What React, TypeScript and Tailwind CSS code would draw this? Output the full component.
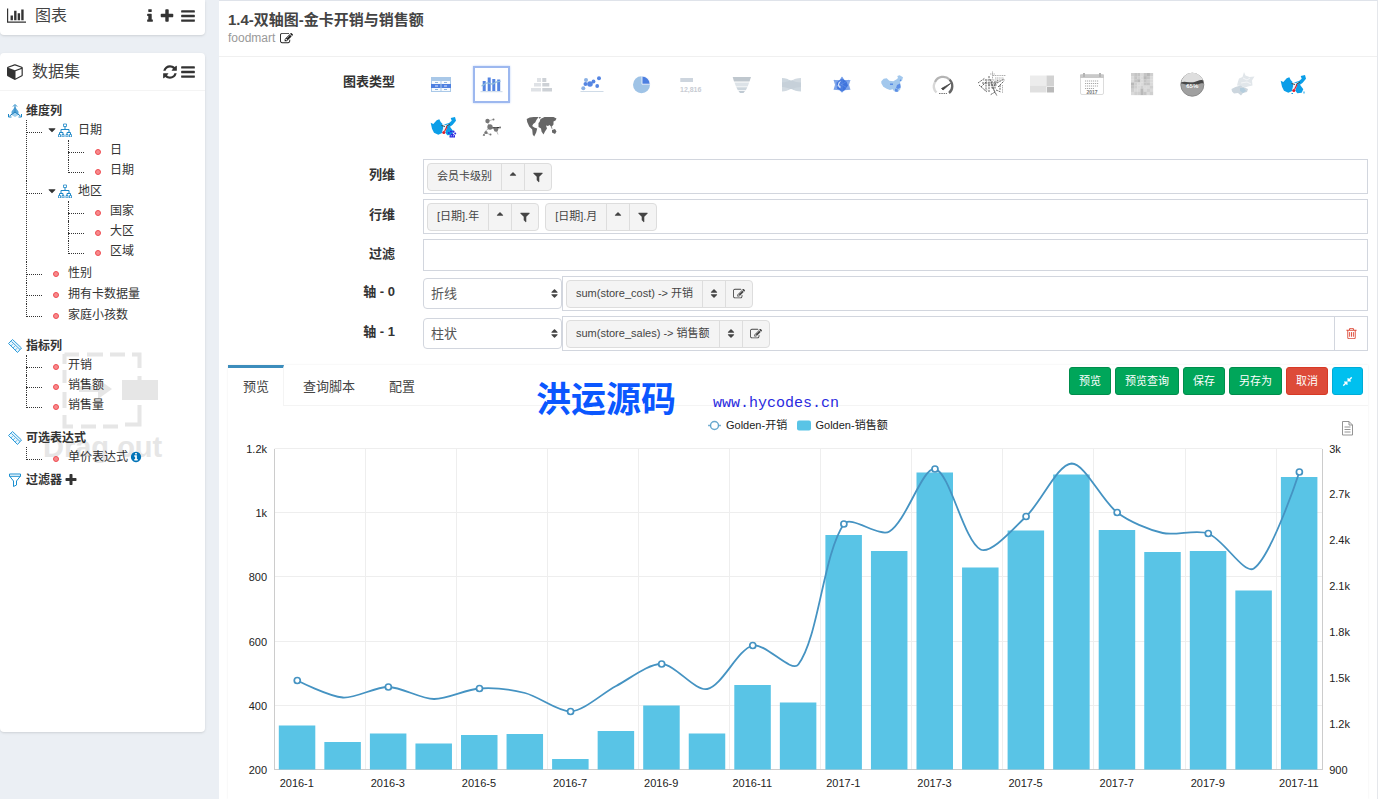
import { ReactNode } from "react";

const glyphs = {
  chart:
    "M640 896v512h-256v-512h256zm384-512v1024h-256v-1024h256zm1024 1152v128h-2048v-1536h128v1408h1920zm-640-896v768h-256v-768h256zm384-384v1152h-256v-1152h256z",
  info: "M1216 1344v128q0 26-19 45t-45 19h-512q-26 0-45-19t-19-45v-128q0-26 19-45t45-19h64v-384h-64q-26 0-45-19t-19-45v-128q0-26 19-45t45-19h384q26 0 45 19t19 45v576h64q26 0 45 19t19 45zm-128-1152v192q0 26-19 45t-45 19h-256q-26 0-45-19t-19-45v-192q0-26 19-45t45-19h256q26 0 45 19t19 45z",
  plus: "M1600 736v192q0 40-28 68t-68 28h-416v416q0 40-28 68t-68 28h-192q-40 0-68-28t-28-68v-416h-416q-40 0-68-28t-28-68v-192q0-40 28-68t68-28h416v-416q0-40 28-68t68-28h192q40 0 68 28t28 68v416h416q40 0 68 28t28 68z",
  bars: "M1664 1344v128q0 26-19 45t-45 19h-1408q-26 0-45-19t-19-45v-128q0-26 19-45t45-19h1408q26 0 45 19t19 45zm0-512v128q0 26-19 45t-45 19h-1408q-26 0-45-19t-19-45v-128q0-26 19-45t45-19h1408q26 0 45 19t19 45zm0-512v128q0 26-19 45t-45 19h-1408q-26 0-45-19t-19-45v-128q0-26 19-45t45-19h1408q26 0 45 19t19 45z",
  cube: "M896 1629l640-349v-636l-640 233v752zm-64-865l698-254-698-254-698 254zm832-252v768q0 35-18 65t-49 47l-704 384q-28 16-61 16t-61-16l-704-384q-31-17-49-47t-18-65v-768q0-40 23-73t61-47l704-256q22-8 44-8t44 8l704 256q38 14 61 47t23 73z",
  refresh:
    "M1639 1056q0 5-1 7-64 268-268 434.5t-478 166.5q-146 0-282.5-55t-243.5-157l-129 129q-19 19-45 19t-45-19-19-45v-448q0-26 19-45t45-19h448q26 0 45 19t19 45-19 45l-137 137q71 66 161 102t187 36q134 0 250-65t186-179q11-17 53-117 8-23 30-23h192q13 0 22.5 9.5t9.5 22.5zm25-800v448q0 26-19 45t-45 19h-448q-26 0-45-19t-19-45 19-45l138-138q-148-137-349-137-134 0-250 65t-186 179q-11 17-53 117-8 23-30 23h-199q-13 0-22.5-9.5t-9.5-22.5v-7q65-268 270-434.5t480-166.5q146 0 284 55.5t245 156.5l130-129q19-19 45-19t45 19 19 45z",
  edit: "M888 1184l116-116-152-152-116 116v56h96v96h56zm440-720q-16-16-33 1l-350 350q-17 17-1 33t33-1l350-350q17-17 1-33zm80 594v190q0 119-84.5 203.5t-203.5 84.5h-832q-119 0-203.5-84.5t-84.5-203.5v-832q0-119 84.5-203.5t203.5-84.5h832q63 0 117 25 15 7 18 23 3 17-9 29l-49 49q-14 14-32 8-23-6-45-6h-832q-66 0-113 47t-47 113v832q0 66 47 113t113 47h832q66 0 113-47t47-113v-126q0-13 9-22l64-64q15-15 35-7t20 29zm-96-738l288 288-672 672h-288v-288zm444 132l-92 92-288-288 92-92q28-28 68-28t68 28l152 152q28 28 28 68t-28 68z",
  filter:
    "M1595 295q17 41-14 70l-493 493v742q0 42-39 59-13 5-25 5-27 0-45-19l-256-256q-19-19-19-45v-486l-493-493q-31-29-14-70 17-39 59-39h1280q42 0 59 39z",
  sort: "M1408 1088q0 26-19 45l-448 448q-19 19-45 19t-45-19l-448-448q-19-19-19-45t19-45 45-19h896q26 0 45 19t19 45zm0-384q0 26-19 45t-45 19h-896q-26 0-45-19t-19-45 19-45l448-448q19-19 45-19t45 19l448 448q19 19 19 45z",
  sortUp:
    "M1408 704q0 26-19 45t-45 19h-896q-26 0-45-19t-19-45 19-45l448-448q19-19 45-19t45 19l448 448q19 19 19 45z",
  caretDown:
    "M1408 704q0 26-19 45l-448 448q-19 19-45 19t-45-19l-448-448q-19-19-19-45t19-45 45-19h896q26 0 45 19t19 45z",
  trash:
    "M704 736v576q0 14-9 23t-23 9h-64q-14 0-23-9t-9-23v-576q0-14 9-23t23-9h64q14 0 23 9t9 23zm256 0v576q0 14-9 23t-23 9h-64q-14 0-23-9t-9-23v-576q0-14 9-23t23-9h64q14 0 23 9t9 23zm256 0v576q0 14-9 23t-23 9h-64q-14 0-23-9t-9-23v-576q0-14 9-23t23-9h64q14 0 23 9t9 23zm128 724v-948h-896v948q0 22 7 40.5t14.5 27 10.5 8.5h832q3 0 10.5-8.5t14.5-27 7-40.5zm-672-1076h448l-48-117q-7-9-17-11h-317q-10 2-17 11zm928 32v64q0 14-9 23t-23 9h-96v948q0 83-47 143.5t-113 60.5h-832q-66 0-113-58.5t-47-141.5v-952h-96q-14 0-23-9t-9-23v-64q0-14 9-23t23-9h309l70-167q15-37 54-63t79-26h320q40 0 79 26t54 63l70 167h309q14 0 23 9t9 23z",
  compress:
    "M896 960v448q0 26-19 45t-45 19-45-19l-144-144-332 332q-10 10-23 10t-23-10l-114-114q-10-10-10-23t10-23l332-332-144-144q-19-19-19-45t19-45 45-19h448q26 0 45 19t19 45zm755-672q0 13-10 23l-332 332 144 144q19 19 19 45t-19 45-45 19h-448q-26 0-45-19t-19-45v-448q0-26 19-45t45-19 45 19l144 144 332-332q10-10 23-10t23 10l114 114q10 10 10 23z",
  infoCircle:
    "M1152 1376v-160q0-14-9-23t-23-9h-96v-512q0-14-9-23t-23-9h-320q-14 0-23 9t-9 23v160q0 14 9 23t23 9h96v320h-96q-14 0-23 9t-9 23v160q0 14 9 23t23 9h448q14 0 23-9t9-23zm-128-896v-160q0-14-9-23t-23-9h-192q-14 0-23 9t-9 23v160q0 14 9 23t23 9h192q14 0 23-9t9-23zm640 416q0 209-103 385.5t-279.5 279.5-385.5 103-385.5-103-279.5-279.5-103-385.5 103-385.5 279.5-279.5 385.5-103 385.5 103 279.5 279.5 103 385.5z",
};

type GlyphName = keyof typeof glyphs;

function Glyph({ name, className }: { name: GlyphName; className: string }) {
  return (
    <svg
      viewBox={name === "chart" ? "0 0 2048 1792" : "0 0 1792 1792"}
      fill="currentColor"
      aria-hidden="true"
      className={`shrink-0 ${className}`}
    >
      <path d={glyphs[name]} />
    </svg>
  );
}

function IconButton({
  name,
  label,
  className,
}: {
  name: GlyphName;
  label: string;
  className: string;
}) {
  return (
    <button type="button" aria-label={label}>
      <Glyph name={name} className={className} />
    </button>
  );
}

/* ---------- sidebar tree ---------- */

function HierarchyIcon() {
  return (
    <svg viewBox="0 0 14 14" className="h-[14px] w-[14px] shrink-0" fill="none" stroke="#1a86c7">
      <path d="M7 3.500v3M3 10V6.500h8V10M1.500 11.500V9.500h3.500v2M9 11.500V9.500h3.500v2" />
      <path d="M5.500 1h3v2.500h-3zM.5 11.500h2V14h-2zM4 11.500h2V14H4zM8 11.500h2V14H8zM11.500 11.500h2V14h-2z" strokeWidth=".8" />
    </svg>
  );
}

function DimensionIcon() {
  return (
    <svg viewBox="0 0 14 14" className="h-[14px] w-[14px] shrink-0">
      <path d="M7 3 11 8 10.500 11 7 13 3.500 11 3 8z" fill="#9fcfec" />
      <path d="M7 1.500V8L1.500 12M7 8l5.500 4" stroke="#1477b8" fill="none" />
      <path d="M5 2.500 7 .5l2 2M.5 10v3h3M13.500 10v3h-3" stroke="#1a86c7" fill="none" />
      <path d="M7 3v5l-3 2V7zM7 3v5l3 2V7z" fill="#3b94cf" opacity=".7" />
    </svg>
  );
}

function RulerIcon() {
  return (
    <svg viewBox="0 0 14 14" className="h-[14px] w-[14px] shrink-0" fill="none" stroke="#2b9bdb">
      <path d="M.5 4.500 4.500.5l9 8.500-4 4.500z" fill="#e9f6fd" />
      <path d="M3 6.800l1.500-1.500M5.200 8.800l1.500-1.500M7.400 10.900l1.500-1.500M3.500 2.500l8.500 8" strokeWidth=".9" />
    </svg>
  );
}

function FunnelIcon() {
  return (
    <svg viewBox="0 0 14 14" className="h-[14px] w-[14px] shrink-0" fill="none" stroke="#1a8fd0">
      <path d="M1.500 1h11v2L8.500 8v4l-3 1.500V8l-4-5zM1.500 3.300h11" />
    </svg>
  );
}

const branch =
  "relative before:absolute before:left-0 before:top-0 before:h-[13px] before:w-4 before:border-b before:border-dotted before:border-[#333] after:absolute after:left-0 after:top-0 after:h-full after:border-l after:border-dotted after:border-[#333] last:after:h-[13px]";

function Leaf({ text, row = "h-5", children }: { text: string; row?: string; children?: ReactNode }) {
  return (
    <li className={branch}>
      <div className={`flex items-center pl-[27px] ${row}`}>
        <span className="mt-[3px] h-[6px] w-[6px] shrink-0 rounded-full border border-[#ef4d52] bg-[#f7898c]" />
        <span className="ml-[9px]">{text}</span>
        {children}
      </div>
    </li>
  );
}

function Folder({ text, items }: { text: string; items: string[] }) {
  return (
    <li className={`pb-px ${branch}`}>
      <div className="flex h-5 items-center pl-[20px]">
        <Glyph name="caretDown" className="h-3 w-3" />
        <HierarchyIcon />
        <span className="ml-[6px]">{text}</span>
      </div>
      <ul className="ml-[42px]">
        {items.map((item) => (
          <Leaf key={item} text={item} />
        ))}
      </ul>
    </li>
  );
}

function TreeSection({ icon, title, children }: { icon: ReactNode; title: string; children: ReactNode }) {
  return (
    <section className="relative">
      <h3 className="flex h-[18px] items-center gap-1 font-bold">
        {icon}
        {title}
      </h3>
      <ul className="ml-[18px]">{children}</ul>
    </section>
  );
}

function DragHint() {
  return (
    <svg viewBox="0 0 124 116" className="absolute left-[42px] top-[256px] w-[124px]" fill="#e6e6e6">
      <path
        d="M22.500 7.500H37M45 7.500h16M68 7.500h15M90 7.500h7.500V21M97.500 29v14M97.500 58v19.500H83M76 79.500H61M54 79.500H39M31 79.500h-8.500V68M22.500 61V45M22.500 36V23M22.500 17V7"
        fill="none"
        stroke="#e6e6e6"
        strokeWidth="4"
      />
      <rect x="80" y="33" width="36" height="20" />
      <path d="M37 39h19v-7l14 10-14 10v-7H37z" />
      <text x="1" y="110" fontSize="29" fontWeight="bold" fontFamily="Liberation Sans, sans-serif">
        Drag out
      </text>
    </svg>
  );
}

function Sidebar() {
  return (
    <aside className="w-[219px] shrink-0 pr-[14px] text-[#333]">
      <div className="flex h-[35px] items-center rounded-b-sm bg-white pb-1 pl-[7px] pr-[9px] shadow-sm">
        <Glyph name="chart" className="h-[17px] w-[19px]" />
        <h2 className="ml-[9px] text-base text-[#444]">图表</h2>
        <div className="ml-auto flex items-center">
          <IconButton name="info" label="帮助" className="h-4 w-4" />
          <IconButton name="plus" label="新增" className="ml-px h-4 w-4" />
          <IconButton name="bars" label="菜单" className="ml-[5px] h-4 w-4" />
        </div>
      </div>

      <div className="mt-[18px] rounded-sm bg-white shadow-sm">
        <div className="flex h-[38px] items-center border-b border-[#f4f4f4] pl-[7px] pr-[9px]">
          <Glyph name="cube" className="h-[17px] w-[17px]" />
          <h2 className="ml-2 text-base text-[#444]">数据集</h2>
          <div className="ml-auto flex items-center">
            <IconButton name="refresh" label="刷新" className="h-4 w-4" />
            <IconButton name="bars" label="菜单" className="ml-[2px] h-4 w-4" />
          </div>
        </div>

        <div className="relative min-h-[641px] pl-2 pt-[11px] text-xs">
          <DragHint />
          <TreeSection icon={<DimensionIcon />} title="维度列">
            <Folder text="日期" items={["日", "日期"]} />
            <Folder text="地区" items={["国家", "大区", "区域"]} />
            <Leaf text="性别" row="h-[21px]" />
            <Leaf text="拥有卡数据量" row="h-[21px]" />
            <Leaf text="家庭小孩数" row="h-[21px]" />
          </TreeSection>
          <div className="mt-3">
            <TreeSection icon={<RulerIcon />} title="指标列">
              <Leaf text="开销" />
              <Leaf text="销售额" />
              <Leaf text="销售量" />
            </TreeSection>
          </div>
          <div className="mt-[14px]">
            <TreeSection icon={<RulerIcon />} title="可选表达式">
              <Leaf text="单价表达式">
                <Glyph name="infoCircle" className="ml-[2px] h-3 w-3 text-[#0073b7]" />
              </Leaf>
            </TreeSection>
          </div>
          <div className="relative mt-1 flex h-[18px] items-center font-bold">
            <FunnelIcon />
            <span className="ml-1 mr-[2px]">过滤器</span>
            <IconButton name="plus" label="新增过滤器" className="h-[14px] w-[14px]" />
          </div>
        </div>
      </div>
    </aside>
  );
}

/* ---------- chart type icons, drawn on a 37 x 37 box ---------- */

const china =
  "M8.300 15.300l2.400-2.600 3-.4 2.600 2.400 4 .6 3.400-2L25 12l-.7-2 2.400-.7 3.300 2-1 3.400-2 1.300.7 4-.4 3.300L25 26l-4-.7-1.300-2-2.700.7-3.300-1.300-3.400-2-2-3.400z";
const chinaWest =
  "M7.700 14.700l2.600 1.300 3.400-3.700 2.600-1L17.700 14l2.600 2.700v4l-.6 4-4.400 2-4.300-2-2-4z";
const chinaEast =
  "M21 16.500l5-1.500 2.700-2.300-1-2.700L32 9l1 3.700-3.300 4-2.700 2 3.300 4.600-1.600 3.400-4.400.6-2-2.600 1.400-4.700z";

function MarkerMap({ baidu }: { baidu?: boolean }) {
  return (
    <>
      <path d={chinaWest} fill="#0b9ee8" />
      <path d={chinaEast} fill="#0b9ee8" />
      <path d="M19 16l4 1 3-1-3 4-2 5-2-1 1.500-5z" fill="#e8f4fb" />
      <path d="M18.500 17.500l3.500 1M27 16l-4 2.500" stroke="#444" strokeWidth="1" />
      <path d="M24 18.500l-2.500 5" stroke="#e0202a" strokeWidth="1.200" />
      <circle cx="20.800" cy="24.500" r="1.500" fill="#e0202a" />
      {baidu ? (
        <g fill="#2b2be0">
          <circle cx="25.800" cy="25" r="1" />
          <circle cx="28" cy="23.500" r="1.100" />
          <circle cx="30.500" cy="23.700" r="1.100" />
          <circle cx="32.200" cy="25.500" r="1" />
          <path d="M29.200 25l2.800 2.500v2h-5.500v-2z" />
          <path d="M27.800 27.800h1M30 27.800h1" stroke="#fff" strokeWidth=".8" />
        </g>
      ) : (
        <path d="M30.500 25.500h1v2h-1zM18.500 27h1.500v1h-1.500z" fill="#0b9ee8" />
      )}
    </>
  );
}

const heat = [
  "cbbdbac", "dbcdabd", "dbadbcd", "acddbbd", "bcdcddc", "cddadcd", "dccabdc",
];
const heatFill: Record<string, string> = { a: "#b8b8b8", b: "#c4c4c4", c: "#cfcfcf", d: "#dadada" };

const words =
  "M5 17l7-5M6 19l8 7M9 17h14M8 21l6-6M13 13v11M16 10v16M17 13l5 14M19 15v7M22 15v8M25 14l-6 9M24 17l7-4M25 21l6-6M20 22l4 8M22 26l-5 3M27 19v5M15 19h9M23 24l5 2";
const smallWords = "M20 9.500h13M22 12h9M24 14h8M18 14h6M19.500 5.500v8M29.500 19v8M10 14h6M11 24h4M17 8h5";

const typeIcons: { name: string; art: ReactNode }[] = [
  {
    name: "表格",
    art: (
      <>
        <path d="M8 11h20v15H8z" fill="#a9c8e8" />
        <path d="M9 15h18v3H9zM9 22h18v3H9z" fill="#f6fafd" />
        <path d="M8 18h20v4H8z" fill="#4c7fe0" />
        <path d="M12 16.500h3M21 16.500h3M12 23.500h3M21 23.500h3" stroke="#8fb4dd" />
        <path d="M12 20h3M21 20h3" stroke="#dce8fb" />
        <path d="M18 15v10" stroke="#a9c8e8" />
      </>
    ),
  },
  {
    name: "折柱图",
    art: (
      <>
        <path d="M9.700 15h3v10h-3zM14.700 11.500h3V25h-3zM19.300 13h3v12h-3zM24.200 13.500h3V25h-3z" fill="#5585e2" />
        <path d="M8.500 20c3-1 4-4 7-3s4 2 6 0 4-1 6-2" stroke="#8fbcdc" strokeWidth="1.300" fill="none" />
        <path d="M7.500 25.700h22" stroke="#c9d8e8" />
      </>
    ),
  },
  {
    name: "交叉图",
    art: (
      <>
        <path d="M14 12h4v4h-4zM11 17h7v3.500h-7zM8 22h10v3.500H8z" fill="#dfe2e6" />
        <path d="M19.300 12h4v4h-4zM19.300 17h7v3.500h-7zM19.300 22H29v3.500h-9.700z" fill="#cdd1d6" />
      </>
    ),
  },
  {
    name: "散点图",
    art: (
      <>
        <path d="M7.500 25.500h23" stroke="#cfdbe7" />
        <g fill="#8ab0e4">
          <circle cx="13" cy="14" r="2" />
          <circle cx="10.300" cy="22.300" r="2" />
        </g>
        <g fill="#5585e2">
          <circle cx="12.500" cy="18" r="2" />
          <circle cx="17" cy="18" r="2.800" />
          <circle cx="20.500" cy="15.500" r="1.900" />
          <circle cx="26" cy="12.300" r="2" />
          <circle cx="24.200" cy="20" r="1.900" />
        </g>
      </>
    ),
  },
  {
    name: "饼图",
    art: (
      <>
        <circle cx="18.500" cy="18.700" r="8.500" fill="#9fc3e6" />
        <path d="M19 18.200V10a8.500 8.500 0 0 1 8.200 8.200z" fill="#4c7fe0" stroke="#fff" strokeWidth=".8" />
      </>
    ),
  },
  {
    name: "指标卡",
    art: (
      <>
        <path d="M7.300 12H20v4H7.300z" fill="#cdd5de" />
        <text x="7" y="25.500" fontSize="7" fontWeight="bold" fill="#c8ccd3" fontFamily="Liberation Sans, sans-serif">
          12,816
        </text>
      </>
    ),
  },
  {
    name: "漏斗图",
    art: (
      <>
        <path d="M9.700 11H28l-1.500 4.500H11z" fill="#bfc7ce" />
        <path d="M11.500 16.500h14.700l-1.500 4H13z" fill="#dde3e8" />
        <path d="M13.300 21.300h11l-1.500 3h-8z" fill="#cdd6dd" />
        <path d="M15.500 25h6.500l-1.500 2H17z" fill="#c0cad3" />
      </>
    ),
  },
  {
    name: "桑基图",
    art: (
      <>
        <path d="M9 12c7 0 11 4.500 19 4.500v9C20 25.500 16 21 9 21z" fill="#cdd7df" />
        <path d="M9 25.500c7 0 11-4.500 19-4.500v-9C20 12 16 16.500 9 16.500z" fill="#c3ced7" opacity=".75" />
        <path d="M14 12.800l4 1.700 4-1.700zM14 24.800l4-1.700 4 1.700z" fill="#fff" />
      </>
    ),
  },
  {
    name: "雷达图",
    art: (
      <>
        <path d="M19 10.500l2.500 3.500 6 0-1.500 4.700 1.500 5-6 .5-2.500 2.500-2.500-2.500-6-.5 1.500-5L10.500 14l6 0z" fill="#82a8ea" />
        <path d="M19 12.500l4.500 3 1.500 4-3 4.500-3 1.500-5-3-.5-6z" fill="#3f74dd" />
        <path d="M18 14.500l-2.500 2-1 3.500 3 2.500v-2.500l-1.500-1z" fill="#dbe7fb" />
        <path d="M19 11v15M11 14l15 9M26 14l-15 9" stroke="#6d98e8" strokeWidth=".5" />
      </>
    ),
  },
  {
    name: "地图",
    art: (
      <>
        <path d={china} fill="#a3c8ed" />
        <path d="M24 19l3-1.500.7 4-2.700 1.500-2-1zM22 22.500l3 1-.5 2.500-2.500-.5z" fill="#5b8de6" />
        <path d="M17 17.500h3v1.500h-3zM26.500 15l1.500-2v2z" fill="#5b8de6" />
      </>
    ),
  },
  {
    name: "仪表盘",
    art: (
      <>
        <path d="M13.500 26.500A9 9 0 0 1 12 16" stroke="#d8d8d8" strokeWidth="2.300" fill="none" />
        <path d="M12 16a9 9 0 0 1 14.500-2.500" stroke="#b4b4b4" strokeWidth="2.300" fill="none" />
        <path d="M26.500 13.500a9 9 0 0 1-.5 13.500" stroke="#666" strokeWidth="2.300" fill="none" />
        <path d="M18.500 22.500l9-5-7.500 6.500z" fill="#444" stroke="#444" strokeWidth=".8" />
        <path d="M16 27.500h8" stroke="#777" strokeWidth="1.200" strokeDasharray="1.500 .8" />
      </>
    ),
  },
  {
    name: "词云",
    art: (
      <>
        <path d={words} stroke="#666" strokeWidth="1" strokeDasharray="2 .8" />
        <path d={smallWords} stroke="#999" strokeWidth=".8" strokeDasharray="1.200 .6" />
      </>
    ),
  },
  {
    name: "矩形树图",
    art: (
      <>
        <path d="M7 9.500h16.500v10H7z" fill="#ececec" />
        <path d="M7 19.500h16.500v7H7z" fill="#e0e0e0" />
        <path d="M23.500 9.500H31v11h-7.500z" fill="#d2d2d2" />
        <path d="M24 21h7v5.500h-7z" fill="#b9b9b9" />
      </>
    ),
  },
  {
    name: "日历图",
    art: (
      <>
        <rect x="7.500" y="8.500" width="23" height="20" rx="1.500" fill="#fff" stroke="#dcdcdc" />
        <path d="M7 8.500h24V12H7z" fill="#c9c9c9" />
        <path d="M10 7h2v4h-2zM26 7h2v4h-2z" fill="#b4b4b4" />
        <path d="M12 15h14M12 17.500h14M12 20h13M12 22.500h9" stroke="#a8a8a8" strokeWidth="1.200" strokeDasharray="1.200 .8" />
        <text x="13.500" y="27.500" fontSize="5" fontWeight="bold" fill="#777" fontFamily="Liberation Sans, sans-serif">
          2017
        </text>
      </>
    ),
  },
  {
    name: "热力图",
    art: (
      <>
        {heat.map((row, y) =>
          row.split("").map((c, x) => (
            <rect key={`${x}-${y}`} x={8 + x * 3.14} y={7 + y * 3.14} width="3.300" height="3.300" fill={heatFill[c]} />
          ))
        )}
      </>
    ),
  },
  {
    name: "水球图",
    art: (
      <>
        <circle cx="19.300" cy="18.700" r="11.500" fill="#a0a0a0" stroke="#8a8a8a" />
        <path d="M8.300 16.500a11.200 11.200 0 0 1 22-1z" fill="#dedede" />
        <path d="M8 16.500c4-2 8 .5 12 0s7-3.500 10-2l.5 3c-4-1-6 2.500-11 2.500S11 17 8 17.500z" fill="#484848" />
        <text x="19.300" y="21.500" fontSize="6" fontWeight="bold" fill="#fff" textAnchor="middle" fontFamily="Liberation Sans, sans-serif">
          65%
        </text>
      </>
    ),
  },
  {
    name: "区域地图",
    art: (
      <>
        <path d="M21 6l1.500 3.500 4 1.500 5-.5-2.500 4 .5 5-4.500 1-3 1-3-1.500-5-.5 1-4 1-3 3.500-1.500z" fill="#e1e6ea" />
        <path d="M20 12l4 2 3-2M18 17l6-1 4 2" stroke="#f8f9fa" fill="none" strokeWidth=".8" />
        <path d="M8.500 23l4-2 5-1.500 4 2 3.500 1.500-1 3-4 1-2 2.500-3-2.500-4 .5-2-2z" fill="#ccd6de" />
        <path d="M17 22l4 0 2 3-3 2-3-2z" fill="#b4cddd" />
      </>
    ),
  },
  { name: "标记地图", art: <MarkerMap /> },
  { name: "百度地图", art: <MarkerMap baidu /> },
  {
    name: "关系图",
    art: (
      <>
        <path d="M14 13.500l6-2M14 13.500l3 6M17 19.500l-5 4M17 19.500l6 2 5-2.500M12 24.500l-2 3M12 24.500l5 2M23 21.500l2 5" stroke="#aaa" strokeWidth=".8" />
        <g fill="#777">
          <circle cx="14.500" cy="13" r="2.200" />
          <circle cx="17" cy="19" r="2.700" />
          <circle cx="23" cy="21.500" r="2.200" />
          <circle cx="13" cy="24.500" r="1.600" />
          <circle cx="20.500" cy="11.500" r="1" />
          <circle cx="27" cy="19.500" r="1" />
          <circle cx="11" cy="27" r="1" />
          <circle cx="17.500" cy="26.500" r="1" />
        </g>
      </>
    ),
  },
  {
    name: "世界地图",
    art: (
      <g fill="#666">
        <path d="M3.700 11l3-1.500 4-.5 5 0-2 2.500-1.500 3-2 1.500-1 2 2 1.500 3 1-1 4-2 4-1.500-2-.5-5-3-3-2-4.500z" />
        <path d="M16 9l2 0-1.500 2z" />
        <path d="M16.500 14l1-3 4-2 4 0 5 0 3 1.500-1 2-2 1 0 3-2 2.500-2-2-1.500 1-2-.5 1 3-2 3-1.500 3-2-3-.5-3-2.500-1.500 0-4z" />
        <path d="M29 22l3-1 1.500 2.500-1.500 2.500-3-1.500zM27.500 18.500l2 1.500-.5 1z" />
      </g>
    ),
  },
];

function TypePicker() {
  return (
    <div className="flex flex-1 flex-wrap gap-x-[13px] gap-y-[5px] pr-4">
      {typeIcons.map((icon, i) => (
        <button
          key={icon.name}
          type="button"
          aria-label={icon.name}
          aria-pressed={i === 1}
          className={`h-[37px] w-[37px] ${i === 1 ? "shadow-[0_0_2px_#bcd0f7] outline-2 -outline-offset-2 outline-[#9db8ef]" : ""}`}
        >
          <svg viewBox="0 0 37 37" className="h-full w-full">
            {icon.art}
          </svg>
        </button>
      ))}
    </div>
  );
}

/* ---------- form ---------- */

function FormRow({ label, htmlFor, children }: { label: string; htmlFor?: string; children: ReactNode }) {
  const labelClass = "mr-7 w-[176px] shrink-0 pb-[3px] text-right text-[13px] font-bold text-[#333]";
  return (
    <div className="flex items-center">
      {htmlFor ? (
        <label htmlFor={htmlFor} className={labelClass}>
          {label}
        </label>
      ) : (
        <span className={labelClass}>{label}</span>
      )}
      {children}
    </div>
  );
}

function DropBox({ children }: { children?: ReactNode }) {
  return <div className="flex h-[35px] flex-1 items-center gap-[6px] border border-[#d2d6de] px-[3px]">{children}</div>;
}

function Chip({ text, sort, action }: { text: string; sort: GlyphName; action: GlyphName }) {
  return (
    <div className="flex h-[28px] divide-x divide-[#ddd] rounded-sm border border-[#ddd] bg-[#f4f4f4] text-[11px] text-[#444]">
      <button type="button" className="px-[9px]">
        {text}
      </button>
      <button type="button" aria-label="排序" className="px-[5px]">
        <Glyph name={sort} className="h-[11px] w-[12px]" />
      </button>
      <button type="button" aria-label={action === "edit" ? "编辑" : "筛选"} className="px-[7px]">
        <Glyph name={action} className="h-[12px] w-[12px]" />
      </button>
    </div>
  );
}

function AxisRow({ index, kind, text, removable }: { index: number; kind: string; text: string; removable?: boolean }) {
  const id = `axis-${index}`;
  return (
    <FormRow label={`轴 - ${index}`} htmlFor={id}>
      <div className="relative w-[139px] shrink-0">
        <select
          id={id}
          defaultValue={kind}
          className="h-[31px] w-full appearance-none rounded border border-[#d2d6de] bg-white px-[7px] text-[13px] text-[#555]"
        >
          <option>折线</option>
          <option>柱状</option>
        </select>
        <Glyph name="sort" className="pointer-events-none absolute right-[2px] top-[9px] h-[13px] w-[11px] text-[#444]" />
      </div>
      <DropBox>
        <Chip text={text} sort="sort" action="edit" />
      </DropBox>
      {removable && (
        <button
          type="button"
          aria-label="删除"
          className="flex h-[35px] w-[33px] items-center justify-center border border-l-0 border-[#d2d6de] text-[#dd4b39]"
        >
          <Glyph name="trash" className="h-[13px] w-[13px]" />
        </button>
      )}
    </FormRow>
  );
}

/* ---------- dual axis chart ---------- */

const step = 45.55;
const left = 46.5;
const top = 43;
const bottom = 364;

// tops of the bars and the line's points, in chart units from the top edge
const bars = [
  319.5, 336, 327.5, 337.5, 329, 328, 353, 325, 299.5, 327.5, 279, 296.5, 129, 145, 66.5, 161.5, 124.5, 68.5, 124, 146,
  145, 184.5, 71,
];
const line = [
  274.5, 291.5, 281, 293, 282.5, 287, 305.5, 280, 258, 283, 239.5, 258.5, 118, 125.5, 63, 143.5, 110.5, 57.5, 106.5,
  127, 127.5, 162.5, 66,
];

function smoothPath(values: number[]) {
  const pts = values.map((y, i) => ({ x: left + step * (i + 0.5), y }));
  const min = Math.min(...values);
  const max = Math.max(...values);
  const clamp = (v: number) => Math.min(max, Math.max(min, v));
  let d = `M${pts[0].x} ${pts[0].y}`;
  let cp = pts[0];
  for (let i = 1; i < pts.length; i++) {
    const p = pts[i];
    const prev = pts[i - 1];
    const next = pts[i + 1] ?? p;
    const lenPrev = Math.hypot(p.x - prev.x, p.y - prev.y);
    const lenNext = Math.hypot(next.x - p.x, next.y - p.y);
    const ratio = lenNext / (lenNext + lenPrev);
    const vx = (next.x - prev.x) * 0.3;
    const vy = (next.y - prev.y) * 0.3;
    const isLast = i === pts.length - 1;
    const before = isLast ? p : { x: p.x - vx * (1 - ratio), y: clamp(p.y - vy * (1 - ratio)) };
    d += `C${cp.x} ${cp.y} ${before.x} ${before.y} ${p.x} ${p.y}`;
    cp = { x: p.x + vx * ratio, y: clamp(p.y + vy * ratio) };
  }
  return d;
}

function DualAxisChart() {
  const right = left + step * 23;
  const leftTicks = ["1.2k", "1k", "800", "600", "400", "200"];
  const rightTicks = ["3k", "2.7k", "2.4k", "2.1k", "1.8k", "1.5k", "1.2k", "900"];
  return (
    <svg viewBox="0 0 1140 393" className="block w-full" fontSize="11" fontFamily="Liberation Sans, Noto Sans CJK SC, sans-serif" fill="#222">
      <g stroke="#eee">
        {leftTicks.slice(0, -1).map((tick, i) => (
          <path key={tick} d={`M${left} ${Math.round(top + i * 64.2) - 0.5}H${right}`} />
        ))}
        {Array.from({ length: 11 }, (_, i) => (
          <path key={i} d={`M${Math.round(left + step * 2 * (i + 1)) - 0.5} ${top}V${bottom}`} />
        ))}
      </g>
      <path d={`M${left} ${top}V${bottom}M${Math.round(right) + 0.5} ${top}V${bottom}M${left} ${bottom - 0.5}H${right}`} stroke="#ccc" />

      {bars.map((y, i) => (
        <rect key={i} x={left + step * i + 4.3} y={y} width="36.500" height={bottom - 0.5 - y} fill="#59c4e6" />
      ))}
      <path d={smoothPath(line)} fill="none" stroke="#4593c2" strokeWidth="1.800" />
      {line.map(
        (y, i) =>
          i % 2 === 0 && (
            <circle key={i} cx={left + step * (i + 0.5)} cy={y} r="3" fill="#fff" stroke="#4593c2" strokeWidth="1.700" />
          )
      )}

      {leftTicks.map((tick, i) => (
        <text key={tick} x="39" y={top + 4 + i * 64.2} textAnchor="end">
          {tick}
        </text>
      ))}
      {rightTicks.map((tick, i) => (
        <text key={tick} x={right + 7} y={top + 3.5 + i * 45.9}>
          {tick}
        </text>
      ))}
      {Array.from({ length: 12 }, (_, i) => (
        <text key={i} x={left + step * (2 * i + 0.5) - 0.5} y="381" textAnchor="middle">
          {i < 6 ? `2016-${2 * i + 1}` : `2017-${2 * i - 11}`}
        </text>
      ))}

      <path d="M480 19.500h13" stroke="#4593c2" strokeOpacity=".7" strokeWidth="1.500" />
      <circle cx="486.500" cy="19.500" r="4" fill="#fff" stroke="#4593c2" strokeOpacity=".8" strokeWidth="1.500" />
      <text x="498" y="23">
        Golden-开销
      </text>
      <rect x="569" y="14.500" width="14" height="10" rx="2" fill="#59c4e6" />
      <text x="587.500" y="23">
        Golden-销售额
      </text>

      <path
        d="M1114.500 15.500h6.500l3.500 3.500v10h-10zM1121 15.500v3.500h3.500M1116.500 21h6M1116.500 23.500h6M1116.500 26h6"
        fill="none"
        stroke="#888"
        strokeWidth=".9"
      />
    </svg>
  );
}

/* ---------- preview panel ---------- */

function ActionButton({ tone, children }: { tone: string; children: ReactNode }) {
  return (
    <button type="button" className={`flex h-7 items-center rounded-[3px] border px-[9px] text-[11px] text-white ${tone}`}>
      {children}
    </button>
  );
}

const green = "border-[#008d4c] bg-[#00a65a]";

function PreviewPanel() {
  return (
    <section className="relative ml-[9px] mt-[14px] bg-white shadow-[0_0_2px_rgba(0,0,0,0.08)]">
      <div className="flex h-[41px] border-b border-[#f4f4f4]">
        <div role="tablist" className="flex gap-1 text-[13px] text-[#444]">
          <button
            type="button"
            role="tab"
            aria-selected="true"
            className="-mb-px border-r border-t-3 border-r-[#f4f4f4] border-t-[#3c8dbc] bg-white pl-[15px] pr-[14px]"
          >
            预览
          </button>
          <button type="button" role="tab" aria-selected="false" className="border-t-3 border-transparent px-[15px]">
            查询脚本
          </button>
          <button type="button" role="tab" aria-selected="false" className="border-t-3 border-transparent px-[15px]">
            配置
          </button>
        </div>
        <div className="ml-auto flex items-start gap-1 pr-[5px] pt-[2px]">
          <ActionButton tone={green}>预览</ActionButton>
          <ActionButton tone={green}>预览查询</ActionButton>
          <ActionButton tone={green}>保存</ActionButton>
          <ActionButton tone={green}>另存为</ActionButton>
          <ActionButton tone="border-[#d73925] bg-[#dd4b39]">取消</ActionButton>
          <ActionButton tone="border-[#00acd6] bg-[#00c0ef]">
            <Glyph name="compress" className="h-[11px] w-[11px]" />
          </ActionButton>
        </div>
      </div>
      <DualAxisChart />
      <span className="pointer-events-none absolute left-[308px] top-[17px] whitespace-nowrap text-[35px] font-bold leading-[35px] text-[#0b57ff]">
        洪运源码
      </span>
      <a
        href="#hycodes"
        className="absolute left-[485px] top-[29px] font-['Liberation_Mono',monospace] text-[15px] leading-5 text-[#2a2ae0]"
      >
        www.hycodes.cn
      </a>
    </section>
  );
}

export default function App() {
  return (
    <div className="flex min-h-screen bg-[#ebeff4] font-['Liberation_Sans','Noto_Sans_CJK_SC',sans-serif]">
      <Sidebar />
      <main className="min-w-0 flex-1 border-r border-t border-r-[#e5e7eb] border-t-[#dfe3ea] bg-white pr-[9px]">
        <header className="-mr-[9px] h-14 border-b border-[#f0f0f0] pl-[9px] pt-[9px]">
          <h1 className="text-[15px] font-bold leading-5 text-[#444]">1.4-双轴图-金卡开销与销售额</h1>
          <div className="flex h-4 items-center text-xs text-[#999]">
            foodmart
            <button type="button" aria-label="编辑" className="ml-[5px] text-[#222]">
              <Glyph name="edit" className="h-[13px] w-[13px]" />
            </button>
          </div>
        </header>

        <form className="pt-[9px]">
          <div className="flex">
            <span className="mr-7 w-[176px] shrink-0 pt-[6px] text-right text-[13px] font-bold leading-5 text-[#333]">图表类型</span>
            <TypePicker />
          </div>
          <div className="mt-[14px] flex flex-col gap-[5px]">
            <FormRow label="列维">
              <DropBox>
                <Chip text="会员卡级别" sort="sortUp" action="filter" />
              </DropBox>
            </FormRow>
            <FormRow label="行维">
              <DropBox>
                <Chip text="[日期].年" sort="sortUp" action="filter" />
                <Chip text="[日期].月" sort="sortUp" action="filter" />
              </DropBox>
            </FormRow>
            <FormRow label="过滤">
              <div className="h-8 flex-1 border border-[#d2d6de]" />
            </FormRow>
            <AxisRow index={0} kind="折线" text="sum(store_cost) -> 开销" />
            <AxisRow index={1} kind="柱状" text="sum(store_sales) -> 销售额" removable />
          </div>
        </form>

        <PreviewPanel />
      </main>
    </div>
  );
}
